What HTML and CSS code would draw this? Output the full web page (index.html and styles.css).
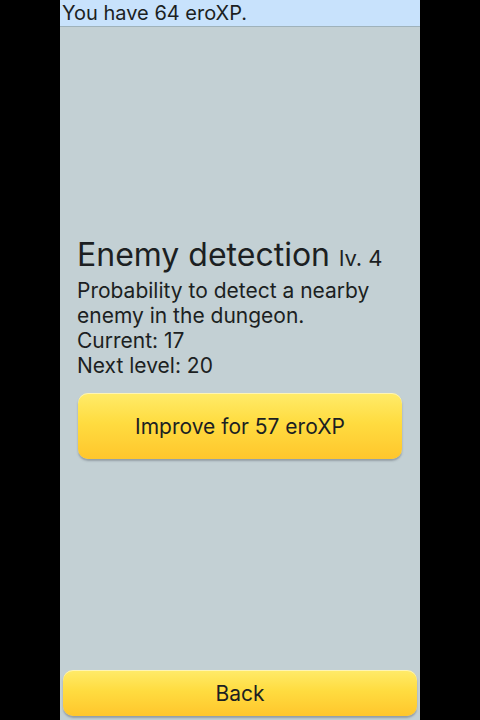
FILE: index.html
```html
<!DOCTYPE html>
<html lang="en">
<head>
  <meta charset="UTF-8" />
  <title>Upgrade</title>
  <link rel="stylesheet" href="styles.css">
</head>
<body>
  <div class="app">
    <div class="topbar">You have 64 eroXP.</div>
    <div class="main">
      <h1 class="skill-name">Enemy detection <span class="level">lv. 4</span></h1>
      <p class="desc">Probability to detect a nearby enemy in the dungeon.</p>
      <p class="stat">Current: 17</p>
      <p class="stat">Next level: 20</p>
      <button class="btn btn-improve">Improve for 57 eroXP</button>
    </div>
    <div class="footer">
      <button class="btn btn-back">Back</button>
    </div>
  </div>
</body>
</html>
```

FILE: styles.css
```css
html, body {
  margin: 0;
  padding: 0;
  background: #000;
}
body {
  font-family: Inter, "Noto Sans", sans-serif;
  color: #1c1f22;
}
.app {
  width: 360px;
  height: 720px;
  margin: 0 auto;
  display: flex;
  flex-direction: column;
  background: #c3d0d4;
}
.topbar {
  height: 26px;
  line-height: 26px;
  padding: 0 2px;
  font-size: 20px;
  background: #c8e2fc;
  border-bottom: 1px solid #9fb2bb;
}
.main {
  flex: 1;
  display: flex;
  flex-direction: column;
  justify-content: center;
  padding: 0 17px 3px;
}
.skill-name {
  margin: 0 0 1px;
  font-size: 32px;
  font-weight: 400;
  line-height: 38px;
}
.level {
  font-size: 22px;
}
.desc, .stat {
  margin: 0;
  font-size: 21px;
  line-height: 25px;
}
.btn {
  font-family: inherit;
  font-size: 21px;
  color: #1c1f22;
  border: none;
  border-radius: 10px;
  background: linear-gradient(to bottom, #ffeb6a 0%, #ffdc40 45%, #ffc62c 100%);
  box-shadow: 0 2px 2px rgba(90, 100, 110, 0.45), inset 0 1px 0 rgba(255, 255, 255, 0.5);
  cursor: pointer;
}
.btn-improve {
  margin: 15px 1px 0;
  height: 66px;
  padding-top: 3px;
}
.footer {
  padding: 0 3px 4px;
}
.btn-back {
  width: 100%;
  height: 46px;
}
```
